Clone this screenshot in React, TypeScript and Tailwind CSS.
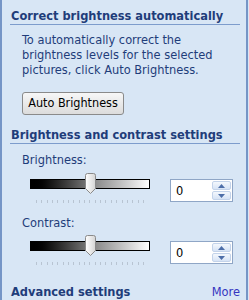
import React from 'react';

const FONT = { fontFamily: '"DejaVu Sans Condensed", "DejaVu Sans", Verdana, sans-serif' };

function SectionHeader({ title }: { title: string }) {
  return (
    <div className="ml-[8px] mr-[6px] border-b border-[#7d9ccc] pl-[1px] text-[12.7px] font-bold leading-[16px] text-[#1f3d7a]">
      {title}
    </div>
  );
}

function Thumb() {
  return (
    <svg width="13" height="22" viewBox="0 0 13 22" className="absolute left-[54px] top-[-6px]">
      <defs>
        <linearGradient id="tg" x1="0" y1="0" x2="1" y2="0">
          <stop offset="0" stopColor="#ffffff" />
          <stop offset="1" stopColor="#d4d4d4" />
        </linearGradient>
      </defs>
      <path d="M1.5 2.5 Q1.5 0.5 3.5 0.5 H9.5 Q11.5 0.5 11.5 2.5 V15.5 L6.5 20.5 L1.5 15.5 Z" fill="url(#tg)" stroke="#8a8a8a" />
    </svg>
  );
}

function Slider() {
  const ticks = Array.from({ length: 21 }, (_, i) => i);
  return (
    <div className="flex flex-col">
      <div className="relative h-[10px] w-[120px]">
        <div className="h-[10px] w-[120px] border border-black bg-gradient-to-r from-black via-[#808080] to-white" />
        <Thumb />
      </div>
      <div className="mt-[11px] flex w-[120px] justify-between px-[6px]">
        {ticks.map((t) => (
          <span key={t} className="h-[3px] w-px bg-[#b8c4d2]" />
        ))}
      </div>
    </div>
  );
}

function Spin() {
  return (
    <div className="flex h-[23px] w-[63px] border border-[#8fa6c6] bg-white">
      <span className="flex-1 pl-[5px] text-[12.7px] leading-[21px] text-black">0</span>
      <div className="my-[1px] mr-[1px] flex w-[19px] flex-col gap-px">
        <div className="flex flex-1 items-center justify-center rounded-[2px] border border-[#c3d3ea] bg-gradient-to-b from-[#f4f8fd] to-[#d6e3f5]">
          <svg width="7" height="4" viewBox="0 0 7 4"><path d="M0 4 L3.5 0 L7 4 Z" fill="#4d6ea8" /></svg>
        </div>
        <div className="flex flex-1 items-center justify-center rounded-[2px] border border-[#c3d3ea] bg-gradient-to-b from-[#f4f8fd] to-[#d6e3f5]">
          <svg width="7" height="4" viewBox="0 0 7 4"><path d="M0 0 L7 0 L3.5 4 Z" fill="#4d6ea8" /></svg>
        </div>
      </div>
    </div>
  );
}

function SliderRow({ label, top, gap }: { label: string; top: string; gap: string }) {
  return (
    <div className={`flex flex-col ${top}`}>
      <span className="ml-[20px] text-[12.7px] leading-[15px] text-[#1f3d7a]">{label}</span>
      <div className={`ml-[28px] flex items-start ${gap}`}>
        <Slider />
        <div className="ml-[20px]">
          <Spin />
        </div>
      </div>
    </div>
  );
}

export default function App() {
  return (
    <div style={FONT} className="h-[300px] w-[249px] overflow-hidden bg-[#d8e6f5]">
      <div className="flex h-[300px] w-[248px] flex-col border-l-2 border-r-2 border-[#7595c6] pt-[8px]">
        <SectionHeader title="Correct brightness automatically" />
        <p className="ml-[20px] mt-[7px] text-[12.7px] leading-[15px] text-[#1f3d7a]">
          To automatically correct the
          <br />
          brightness levels for the selected
          <br />
          pictures, click Auto Brightness.
        </p>
        <button className="ml-[20px] mt-[15px] h-[26px] w-[102px] rounded-[3px] border border-[#8a8a8a] bg-gradient-to-b from-[#f7f7f7] to-[#dcdcdc] text-[12.5px] text-black">
          Auto Brightness
        </button>
        <div className="mt-[12px]">
          <SectionHeader title="Brightness and contrast settings" />
        </div>
        <SliderRow label="Brightness:" top="mt-[8px]" gap="mt-[12px]" />
        <SliderRow label="Contrast:" top="mt-[12px]" gap="mt-[11px]" />
        <div className="mt-[19px] ml-[8px] mr-[6px] flex items-end justify-between pl-[1px]">
          <span className="text-[12.7px] font-bold leading-[16px] text-[#1f3d7a]">Advanced settings</span>
          <span className="text-[12.7px] leading-[16px] text-[#3535c0]">More</span>
        </div>
      </div>
    </div>
  );
}
